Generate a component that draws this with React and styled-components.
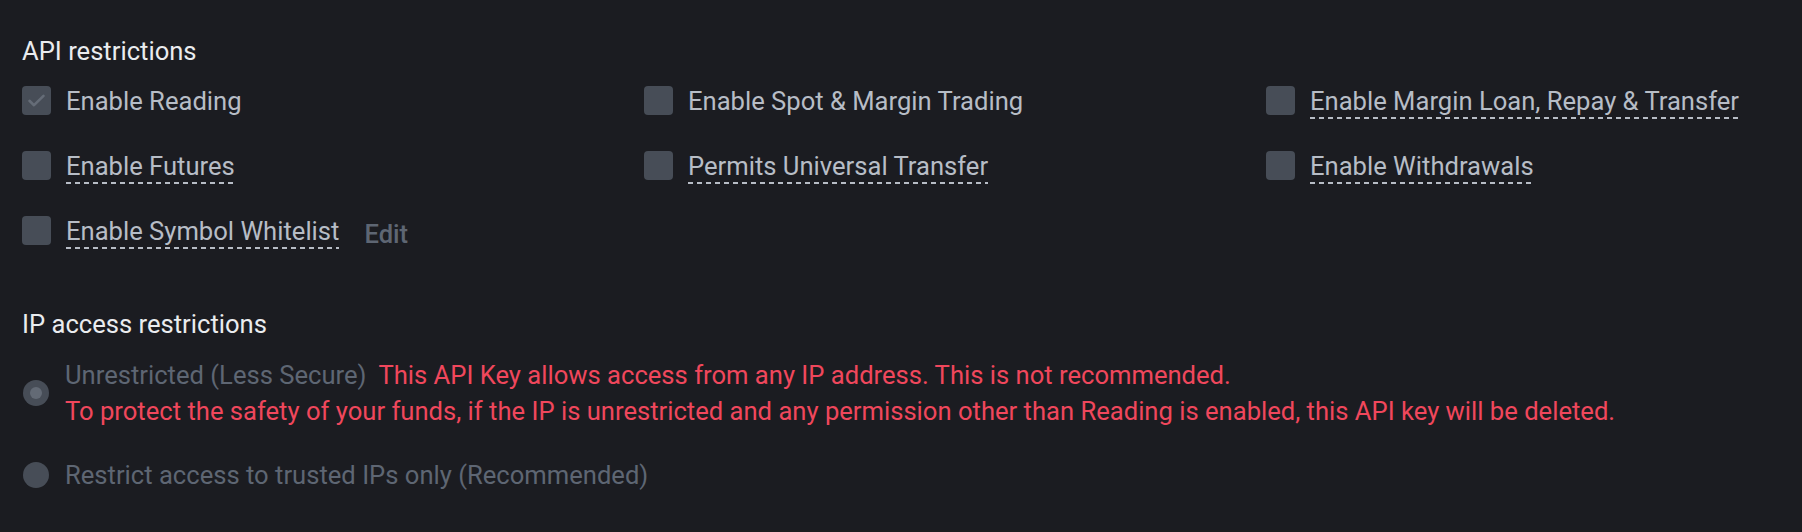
import React from "react";
import styled, { createGlobalStyle } from "styled-components";

const Global = createGlobalStyle`
  html, body {
    margin: 0;
    padding: 0;
    background: #1b1c21;
  }
  body {
    font-family: Roboto, "Noto Sans", "Liberation Sans", sans-serif;
    -webkit-font-smoothing: antialiased;
  }
`;

const FS = "25.6px";

const Page = styled.div`
  min-height: 532px;
  box-sizing: border-box;
  padding: 35px 0 0 22px;
  background: #1b1c21;
`;

const Heading = styled.div`
  font-size: ${FS};
  line-height: 32px;
  color: #eaecef;
  font-weight: 400;
  margin-top: ${(p) => p.$mt || 0}px;
`;

const PermGrid = styled.div`
  display: grid;
  grid-template-columns: 622px 622px 1fr;
  grid-auto-rows: 34px;
  row-gap: 31px;
  margin-top: 18px;
`;

const Item = styled.div`
  display: flex;
  align-items: flex-start;
`;

const Box = styled.span`
  flex: none;
  width: 29px;
  height: 29px;
  margin-top: 1px;
  margin-right: 15px;
  border-radius: 4px;
  background: #474d57;
  display: flex;
  align-items: center;
  justify-content: center;
`;

const Label = styled.span`
  font-size: ${FS};
  line-height: 32px;
  color: #b7bdc6;
  white-space: nowrap;
  padding-bottom: ${(p) => (p.$dashed ? 2 : 0)}px;
  background-image: ${(p) =>
    p.$dashed
      ? "linear-gradient(to right, #b7bdc6 0 5px, transparent 5px 9px)"
      : "none"};
  background-size: 9px 2px;
  background-repeat: repeat-x;
  background-position: 0 100%;
`;

const EditLink = styled.span`
  font-size: ${FS};
  line-height: 32px;
  color: #5e6673;
  font-weight: 500;
  margin-left: 25px;
  margin-top: 3px;
`;

const Options = styled.div`
  display: flex;
  flex-direction: column;
  gap: 28px;
  margin-top: 17px;
`;

const Option = styled.div`
  display: flex;
  align-items: center;
`;

const Radio = styled.span`
  flex: none;
  width: 26px;
  height: 26px;
  border-radius: 50%;
  background: #474d57;
  margin-right: 16px;
  margin-left: 1px;
  display: flex;
  align-items: center;
  justify-content: center;
  &::after {
    content: "";
    display: ${(p) => (p.$checked ? "block" : "none")};
    width: 12px;
    height: 12px;
    border-radius: 50%;
    background: #636a75;
  }
`;

const OptionText = styled.div`
  font-size: ${FS};
  line-height: 36px;
  color: #5e6673;
`;

const Warn = styled.span`
  color: #f0475c;
  margin-left: ${(p) => (p.$inline ? 12 : 0)}px;
`;

const Check = () => (
  <svg width="29" height="29" viewBox="0 0 29 29" fill="none">
    <path
      d="M7.5 14.8 L12 19.2 L21.5 9.8"
      stroke="#656c77"
      strokeWidth="2.6"
      strokeLinecap="round"
      strokeLinejoin="round"
    />
  </svg>
);

const perms = [
  { label: "Enable Reading", checked: true },
  { label: "Enable Spot & Margin Trading" },
  { label: "Enable Margin Loan, Repay & Transfer", dashed: true },
  { label: "Enable Futures", dashed: true },
  { label: "Permits Universal Transfer", dashed: true },
  { label: "Enable Withdrawals", dashed: true },
  { label: "Enable Symbol Whitelist", dashed: true, edit: true },
];

export default function App() {
  return (
    <>
      <Global />
      <Page>
        <Heading>API restrictions</Heading>
        <PermGrid>
          {perms.map((p) => (
            <Item key={p.label}>
              <Box>{p.checked && <Check />}</Box>
              <Label $dashed={p.dashed}>{p.label}</Label>
              {p.edit && <EditLink>Edit</EditLink>}
            </Item>
          ))}
        </PermGrid>
        <Heading $mt={59}>IP access restrictions</Heading>
        <Options>
          <Option>
            <Radio $checked />
            <OptionText>
              Unrestricted (Less Secure)
              <Warn $inline>
                This API Key allows access from any IP address. This is not
                recommended.
              </Warn>
              <br />
              <Warn>
                To protect the safety of your funds, if the IP is unrestricted
                and any permission other than Reading is enabled, this API key
                will be deleted.
              </Warn>
            </OptionText>
          </Option>
          <Option>
            <Radio />
            <OptionText>Restrict access to trusted IPs only (Recommended)</OptionText>
          </Option>
        </Options>
      </Page>
    </>
  );
}
